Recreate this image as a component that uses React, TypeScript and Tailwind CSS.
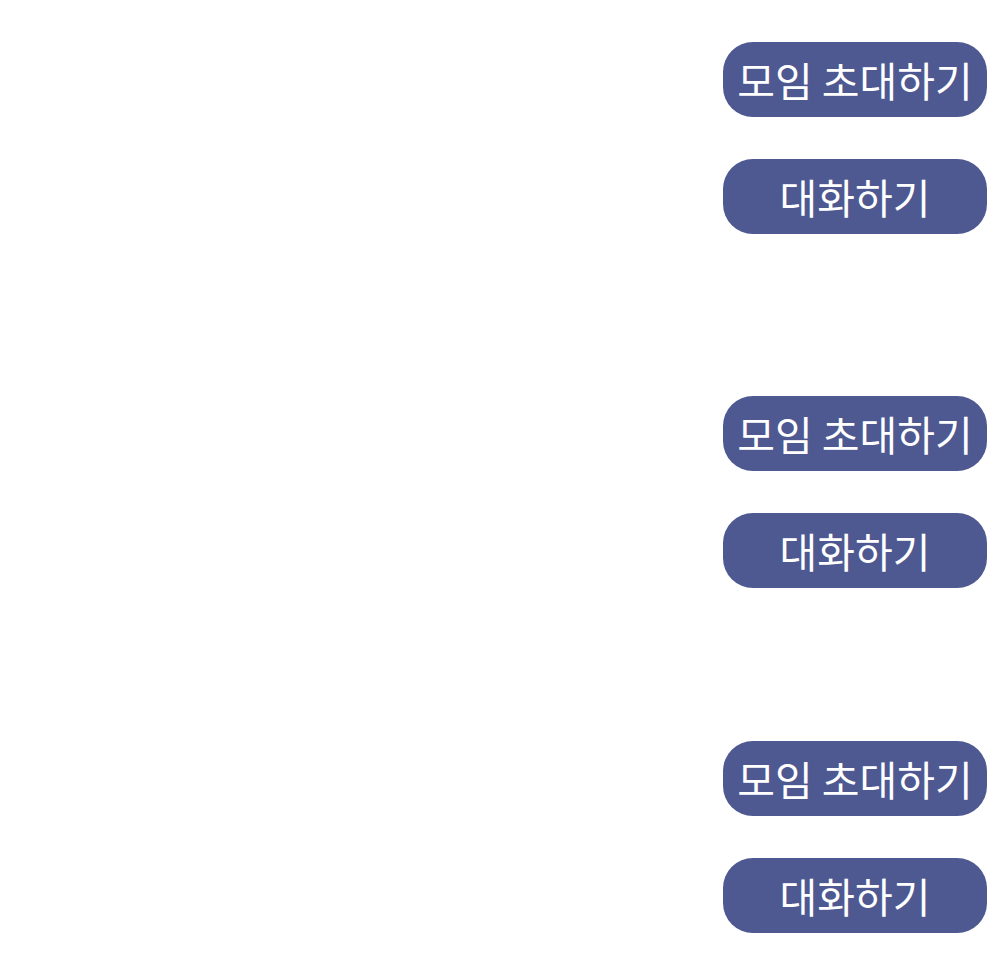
const groups = [
  { mt: "mt-[42px]" },
  { mt: "mt-[162px]" },
  { mt: "mt-[153px]" },
];

const Pill = ({ label }: { label: string }) => (
  <button className="w-[264px] h-[75px] rounded-[30px] bg-[#4e5891] text-white text-[41px] leading-none flex items-center justify-center whitespace-nowrap">
    {label}
  </button>
);

const App = () => {
  return (
    <div
      className="min-h-screen bg-white flex flex-col items-end pr-[15px]"
      style={{ fontFamily: '"Noto Sans CJK KR", sans-serif' }}
    >
      {groups.map((g, i) => (
        <div key={i} className={`${g.mt} flex flex-col gap-[42px]`}>
          {/* invite */}
          <Pill label="모임 초대하기" />
          {/* chat */}
          <Pill label="대화하기" />
        </div>
      ))}
    </div>
  );
};

export default App;
